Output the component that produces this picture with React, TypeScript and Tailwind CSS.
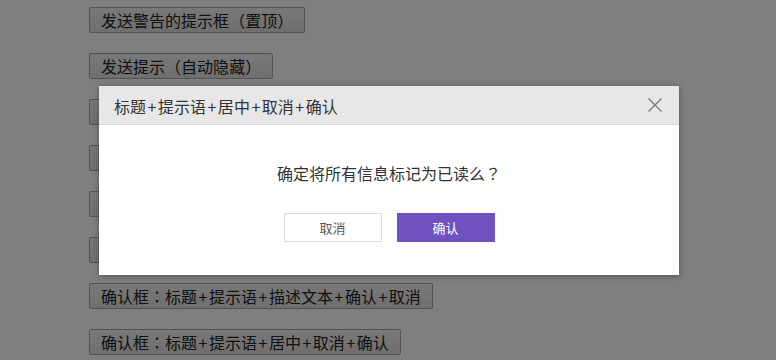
import React from "react";

const font = { fontFamily: '"Noto Sans CJK SC", "Noto Sans", sans-serif' };

function T({ s }: { s: string }) {
  return (
    <>
      {Array.from(s).map((c, i) => {
        if (c === "+") {
          return (
            <span key={i} className="px-[1.5px]">
              +
            </span>
          );
        }
        if (c === "：" || c === "？") {
          return (
            <span key={i} style={{ fontFamily: '"Noto Sans CJK TC", sans-serif' }}>
              {c}
            </span>
          );
        }
        return <React.Fragment key={i}>{c}</React.Fragment>;
      })}
    </>
  );
}

const labels = [
  "发送警告的提示框（置顶）",
  "发送提示（自动隐藏）",
  "确认框：标题+提示语+确认",
  "确认框：标题+提示语+取消+确认",
  "确认框：标题+提示语+描述文本",
  "确认框：标题+提示语+描述文本+确认",
  "确认框：标题+提示语+描述文本+确认+取消",
  "确认框：标题+提示语+居中+取消+确认",
];

export default function App() {
  return (
    <div className="relative w-[776px] h-[360px] overflow-hidden bg-white" style={font}>
      <div className="flex flex-col items-start gap-[20px] pl-[89px] pt-[7px]">
        {labels.map((l) => (
          <button
            key={l}
            className="h-[26px] px-[11px] border border-[#a5a5a5] rounded-[2px] bg-gradient-to-b from-[#f2f2f2] to-[#dedede] text-[16px] leading-[24px] text-[#222] whitespace-nowrap"
          >
            <T s={l} />
          </button>
        ))}
      </div>
      <div className="absolute inset-0 bg-black/50" />
      <div className="absolute left-[99px] top-[86px] w-[580px] bg-white shadow-[0_1px_6px_rgba(0,0,0,0.35)]">
        <div className="h-[39px] flex items-center justify-between pl-[15px] pr-[15px] bg-[#e7e7e7] border-b border-[#d8d8d8]">
          <span className="text-[16px] text-[#333] leading-[20px] mt-[1px] whitespace-nowrap">
            <T s="标题+提示语+居中+取消+确认" />
          </span>
          <svg width="16" height="16" viewBox="0 0 16 16" className="mr-[1px]">
            <path d="M1.5 1.5 L14.5 14.5 M14.5 1.5 L1.5 14.5" stroke="#7a7a7a" strokeWidth="1.4" fill="none" />
          </svg>
        </div>
        <div className="flex flex-col items-center pt-[38px] pb-[33px]">
          <p className="text-[16px] leading-[20px] text-[#333]">
            <T s="确定将所有信息标记为已读么？" />
          </p>
          <div className="flex gap-[15px] mt-[30px]">
            <button className="w-[98px] h-[29px] border border-[#dcdcdc] bg-white text-[13px] text-[#555]">取消</button>
            <button className="w-[98px] h-[29px] bg-[#6f52bf] text-[13px] text-white">确认</button>
          </div>
        </div>
      </div>
    </div>
  );
}
